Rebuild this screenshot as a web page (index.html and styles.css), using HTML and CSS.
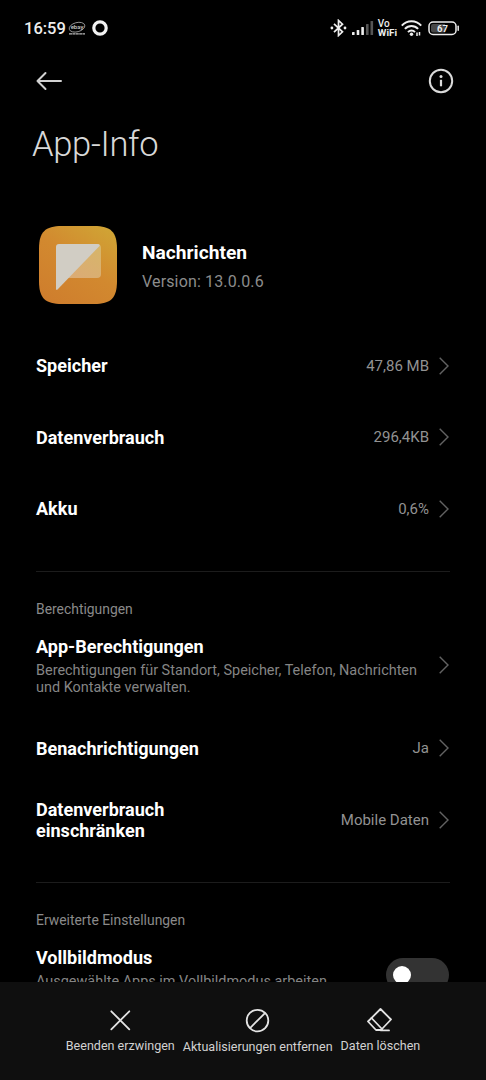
FILE: index.html
```html
<!DOCTYPE html>
<html lang="de">
<head>
    <meta charset="UTF-8">
    <meta name="viewport" content="width=device-width, initial-scale=1.0">
    <title>App-Info</title>
    <link rel="stylesheet" href="styles.css">
</head>
<body>
    <main class="content">
        <!-- Statusleiste -->
        <div class="statusbar">
            <div class="status-left">
                <span class="clock">16:59</span>
                <svg class="ebay" width="18" height="15" viewBox="0 0 18 15">
                    <ellipse cx="9" cy="6.2" rx="8" ry="4.6" transform="rotate(-15 9 6.2)" fill="none" stroke="#aaa" stroke-width="0.8"/>
                    <text x="9" y="8.4" text-anchor="middle" class="ebay-text">ebay</text>
                    <path d="M1 12.800h16" stroke="#bbb" stroke-width="1.200" stroke-dasharray="3 .4"/>
                </svg>
                <svg class="ring" width="16" height="16" viewBox="0 0 16 16">
                    <circle cx="8" cy="8" r="6.2" fill="none" stroke="#f2f2f2" stroke-width="3.2"/>
                </svg>
            </div>
            <div class="status-right">
                <svg width="17" height="18" viewBox="0 0 17 18" fill="none" stroke="#eee" stroke-width="1.7">
                    <path d="M4 4.8l8.5 8L8.500 16.500V1.500L12.500 5.200L4 13.200"/>
                    <circle cx="1.900" cy="9" r="1.400" fill="#eee" stroke="none"/>
                    <circle cx="15" cy="9" r="1.400" fill="#eee" stroke="none"/>
                </svg>
                <svg class="signal" width="22" height="15" viewBox="0 0 22 15" fill="#eee">
                    <rect x="0" y="11" width="2.600" height="3" rx=".6"/>
                    <rect x="4.700" y="9" width="2.600" height="5" rx=".6"/>
                    <rect x="9.300" y="6" width="2.600" height="8" rx=".6"/>
                    <rect x="14" y="3" width="2.600" height="11" rx=".6" fill="#555"/>
                    <rect x="18.500" y="0" width="2.600" height="14" rx=".6" fill="#555"/>
                </svg>
                <div class="vowifi">
                    <div class="vo">Vo</div>
                    <div>WiFi</div>
                </div>
                <svg class="wifi" width="21" height="17" viewBox="0 0 21 17" fill="none" stroke="#eee" stroke-width="2">
                    <path d="M.8 5.600C6-.2 15-.2 20.200 5.600M3.900 8.900C7.600 4.900 13.400 4.900 17.100 8.900M7 12.100C9 10 12 10 14 12.100"/>
                    <circle cx="10.500" cy="14.200" r="1.700" fill="#eee" stroke="none"/>
                    <path d="M16 12.500v3.500M18.500 12v3.500" stroke-width="1.500"/>
                </svg>
                <svg class="battery" width="32" height="15" viewBox="0 0 32 15">
                    <rect x="1" y="1" width="27" height="12.500" rx="4" fill="none" stroke="#eee" stroke-width="1.500"/>
                    <path d="M5 3h12v8.500H5a2 2 0 0 1-2-2V5a2 2 0 0 1 2-2z" fill="#484848"/>
                    <path d="M30.200 5.200v4" stroke="#eee" stroke-width="1.500" stroke-linecap="round"/>
                    <text x="14.500" y="10.800" text-anchor="middle" class="battery-text">67</text>
                </svg>
            </div>
        </div>

        <div class="toolbar">
            <svg width="28" height="20" viewBox="0 0 28 20" fill="none" stroke="#d2d2d2" stroke-width="2" stroke-linecap="round" stroke-linejoin="round">
                <path d="M25 10H1.500M9.500 2L1.500 10l8 8"/>
            </svg>
            <svg width="26" height="26" viewBox="0 0 26 26" fill="none" stroke="#dadada" stroke-width="2">
                <circle cx="13" cy="13" r="11.200"/>
                <path d="M13 11.800v6.500" stroke-width="2.200"/>
                <circle cx="13" cy="8.600" r="1.500" fill="#dadada" stroke="none"/>
            </svg>
        </div>

        <h1>App-Info</h1>

        <!-- App -->
        <div class="app">
            <svg class="app-icon" width="80" height="80" viewBox="0 0 80 80">
                <defs>
                    <linearGradient id="orange" x1="0.200" y1="1" x2="0.900" y2="0">
                        <stop offset="0" stop-color="#cf7e2d"/>
                        <stop offset=".5" stop-color="#d2892f"/>
                        <stop offset="1" stop-color="#d0a535"/>
                    </linearGradient>
                    <linearGradient id="bubble" x1="1" y1="0" x2=".4" y2="1">
                        <stop offset="0" stop-color="#d6b668"/>
                        <stop offset="1" stop-color="#dbac74"/>
                    </linearGradient>
                </defs>
                <path d="M1 24C1 7 7 1 24 1h32c17 0 23 6 23 23v32c0 17-6 23-23 23H24C7 79 1 73 1 56z" fill="url(#orange)"/>
                <path d="M59 19q4 0 4 4v26q0 4-4 4H29z" fill="url(#bubble)"/>
                <path d="M59 19q3.500 0 2.500 2L20 64q-2 2-2-.5V22q0-3 3-3z" fill="#d1cdc4"/>
            </svg>
            <div class="app-text">
                <div class="title app-name">Nachrichten</div>
                <div class="version">Version: 13.0.0.6</div>
            </div>
        </div>

        <div class="row">
            <div class="title">Speicher</div>
            <div class="value">47,86 MB</div>
            <svg class="chevron" viewBox="0 0 10 18"><path d="M.7.700L9 9L.7 17.300"/></svg>
        </div>
        <div class="row">
            <div class="title">Datenverbrauch</div>
            <div class="value">296,4KB</div>
            <svg class="chevron" viewBox="0 0 10 18"><path d="M.7.700L9 9L.7 17.300"/></svg>
        </div>
        <div class="row">
            <div class="title">Akku</div>
            <div class="value">0,6%</div>
            <svg class="chevron" viewBox="0 0 10 18"><path d="M.7.700L9 9L.7 17.300"/></svg>
        </div>

        <!-- Berechtigungen -->
        <section>
            <h2>Berechtigungen</h2>
            <div class="row row-permissions">
                <div class="row-text">
                    <div class="title">App-Berechtigungen</div>
                    <p>Berechtigungen für Standort, Speicher, Telefon, Nachrichten<br>und Kontakte verwalten.</p>
                </div>
                <svg class="chevron" viewBox="0 0 10 18"><path d="M.7.700L9 9L.7 17.300"/></svg>
            </div>
            <div class="row">
                <div class="title">Benachrichtigungen</div>
                <div class="value">Ja</div>
                <svg class="chevron" viewBox="0 0 10 18"><path d="M.7.700L9 9L.7 17.300"/></svg>
            </div>
            <div class="row">
                <div class="title">Datenverbrauch<br>einschränken</div>
                <div class="value">Mobile Daten</div>
                <svg class="chevron" viewBox="0 0 10 18"><path d="M.7.700L9 9L.7 17.300"/></svg>
            </div>
        </section>

        <!-- Erweiterte Einstellungen -->
        <section>
            <h2>Erweiterte Einstellungen</h2>
            <div class="row row-fullscreen">
                <div class="row-text">
                    <div class="title">Vollbildmodus</div>
                    <p>Ausgewählte Apps im Vollbildmodus arbeiten</p>
                </div>
                <div class="switch"></div>
            </div>
        </section>
    </main>

    <!-- Aktionen unten -->
    <footer class="actions">
        <div class="action">
            <svg width="26" height="26" viewBox="0 0 26 26" fill="none" stroke="#e4e4e4" stroke-width="1.800" stroke-linecap="round">
                <path d="M4.300 4.300l18 18M22.300 4.300l-18 18"/>
            </svg>
            <span>Beenden erzwingen</span>
        </div>
        <div class="action action-wide">
            <svg width="26" height="26" viewBox="0 0 26 26" fill="none" stroke="#e4e4e4" stroke-width="1.800">
                <circle cx="12.500" cy="13.600" r="10.800"/>
                <path d="M4.800 21.300L20.200 5.900"/>
            </svg>
            <span>Aktualisierungen entfernen</span>
        </div>
        <div class="action">
            <svg width="26" height="26" viewBox="0 0 26 26" fill="none" stroke="#e4e4e4" stroke-width="1.800" stroke-linejoin="round" stroke-linecap="round">
                <path d="M13.500 2L24 12.500L14 23H9L1 14.500z"/>
                <path d="M4.500 11L15 22M14 23.400H22"/>
            </svg>
            <span>Daten löschen</span>
        </div>
    </footer>
</body>
</html>
```
FILE: styles.css
```css
* {
    box-sizing: border-box;
}

body {
    margin: 0;
    height: 100vh;
    display: flex;
    flex-direction: column;
    background-color: #000;
    color: #fff;
    font-family: Roboto, 'Liberation Sans', sans-serif;
    overflow: hidden;
}

svg {
    display: block;
    flex-shrink: 0;
}

.content {
    flex: 1;
    min-height: 0;
    overflow: hidden;
    padding: 0 36px;
}

/* Statusleiste */
.statusbar {
    display: flex;
    justify-content: space-between;
    align-items: center;
    height: 56px;
    margin: 0 -11px 0 -12px;
}

.status-left, .status-right {
    display: flex;
    align-items: center;
}

.status-right {
    padding-right: 1px;
}

.clock {
    font-size: 16.5px;
    font-weight: 500;
    color: #eee;
}

.ebay {
    margin-left: 2px;
}

.ebay-text {
    font-size: 6px;
    font-weight: 500;
    fill: #ccc;
}

.ring {
    margin-left: 6px;
}

.signal {
    margin-left: 5px;
}

.vowifi {
    margin-left: 4px;
    font-size: 9.8px;
    line-height: 10px;
    font-weight: 700;
    color: #eee;
}

.vo {
    font-size: 10px;
    font-weight: 500;
    line-height: 9px;
}

.wifi {
    margin-left: 4px;
}

.battery {
    margin-left: 6px;
}

.battery-text {
    font-size: 9.5px;
    font-weight: 700;
    fill: #eee;
}

.toolbar {
    display: flex;
    justify-content: space-between;
    align-items: center;
    height: 50px;
    margin-right: -4px;
}

h1 {
    margin: 17px 0 0 -4px;
    font-size: 34.5px;
    line-height: 42px;
    font-weight: 300;
    letter-spacing: -0.3px;
    color: #d8d8d8;
}

/* App */
.app {
    display: flex;
    align-items: center;
    gap: 24px;
    height: 80px;
    margin: 60px 0 25px 2px;
}

.version {
    margin-top: 9px;
    margin-bottom: -1px;
    font-size: 16px;
    line-height: 20px;
    color: #8c8c8c;
    letter-spacing: 0.15px;
}

.title {
    font-size: 18.05px;
    line-height: 21px;
    font-weight: 700;
}

.app-name {
    padding-top: 2px;
    font-size: 19.2px;
}

.row {
    display: flex;
    align-items: center;
    height: 71.5px;
}

.value {
    margin-left: auto;
    font-size: 15px;
    color: #929292;
}

.chevron {
    width: 10px;
    height: 18px;
    margin-left: 10px;
    margin-right: 1px;
    fill: none;
    stroke: #626262;
    stroke-width: 1.4;
}

section {
    margin-top: 26px;
    border-top: 1px solid #1c1c1c;
}

h2 {
    margin: 28px 0 0;
    font-size: 13.9px;
    line-height: 18px;
    font-weight: 400;
    color: #8a8a8a;
}

.row-text {
    flex: 1;
}

.row-text p {
    margin: 5px 0 -1px;
    font-size: 14.45px;
    line-height: 17px;
    color: #858585;
    white-space: nowrap;
}

.row-permissions {
    height: 95px;
}

.row-fullscreen {
    align-items: flex-start;
    padding-top: 18px;
}

.switch {
    width: 63px;
    height: 34px;
    margin: 11px 1px 0 0;
    padding: 8px 7px;
    border-radius: 17px;
    background-color: #333;
}

.switch::before {
    content: '';
    display: block;
    width: 18px;
    height: 18px;
    border-radius: 50%;
    background-color: #fff;
}

/* Aktionen unten */
.actions {
    display: flex;
    justify-content: center;
    gap: 8px;
    height: 98px;
    padding-top: 25px;
    background-color: #0f0f0f;
}

.action {
    display: flex;
    flex-direction: column;
    align-items: center;
    gap: 5px;
    font-size: 12.55px;
    line-height: 16px;
    color: #d2d2d2;
    white-space: nowrap;
}

.action-wide {
    gap: 6px;
}
```
